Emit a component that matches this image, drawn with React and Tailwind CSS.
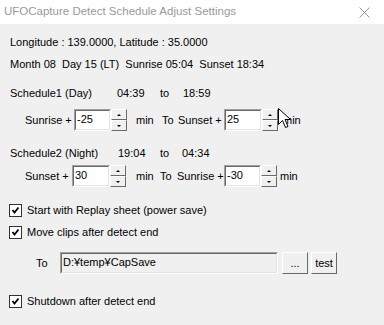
const font = { fontFamily: '"Liberation Sans", Arial, sans-serif' };

function SpinBox({ value, inputW = 37 }) {
  return (
    <div className="flex h-[22px]">
      <div
        className="h-[22px] border border-t-[#a0a0a0] border-l-[#a0a0a0] border-r-white border-b-white"
        style={{ width: inputW }}
      >
        <div className="h-full w-full border border-t-[#696969] border-l-[#696969] border-r-[#e3e3e3] border-b-[#e3e3e3] bg-white pl-[1px] leading-[17px]">
          {value}
        </div>
      </div>
      <div className="flex w-[16px] flex-col">
        <div className="flex h-[11px] items-center justify-center border border-t-white border-l-white border-r-[#696969] border-b-[#696969] bg-[#f0f0f0]">
          <svg width="4" height="2" viewBox="0 0 4 2"><path d="M2 0 L4 2 L0 2 Z" fill="#000" /></svg>
        </div>
        <div className="flex h-[11px] items-center justify-center border border-t-white border-l-white border-r-[#696969] border-b-[#696969] bg-[#f0f0f0]">
          <svg width="4" height="2" viewBox="0 0 4 2"><path d="M0 0 L4 0 L2 2 Z" fill="#000" /></svg>
        </div>
      </div>
    </div>
  );
}

function Check({ label }) {
  return (
    <div className="flex h-[16px] items-center pl-[9px]">
      <div className="flex h-[13px] w-[13px] items-center justify-center border border-[#333] bg-white">
        <svg width="9" height="9" viewBox="0 0 9 9">
          <path d="M1.5 4 L3.5 6.5 L7.5 1.5" stroke="#000" strokeWidth="1.8" fill="none" />
        </svg>
      </div>
      <span className="ml-[5px]">{label}</span>
    </div>
  );
}

function WinButton({ children, w }) {
  return (
    <div
      className="flex h-[22px] items-center justify-center border border-t-white border-l-white border-r-[#696969] border-b-[#696969] bg-[#f0f0f0]"
      style={{ width: w }}
    >
      {children}
    </div>
  );
}

export default function App() {
  return (
    <div className="relative h-[325px] w-[384px] overflow-hidden bg-[#f0f0f0] text-[11px] text-black" style={font}>
      {/* Title bar */}
      <div className="flex h-[24px] items-center justify-between bg-white pl-[4px] pr-[14px]">
        <span className="text-[11.5px] text-[#999]">UFOCapture Detect Schedule Adjust Settings</span>
        <svg width="11" height="11" viewBox="0 0 11 11">
          <path d="M0.5 0.5 L10.5 10.5 M10.5 0.5 L0.5 10.5" stroke="#999" strokeWidth="1" />
        </svg>
      </div>

      <div className="mt-[10px] flex h-[16px] items-center pl-[10px]">Longitude : 139.0000, Latitude : 35.0000</div>
      <div className="mt-[6px] flex h-[16px] items-center pl-[10px] whitespace-pre">Month 08  Day 15 (LT)  Sunrise 05:04  Sunset 18:34</div>

      {/* Schedule 1 */}
      <div className="mt-[13px] flex h-[16px] items-center pl-[10px]">
        <span className="w-[107px]">Schedule1 (Day)</span>
        <span className="w-[43px]">04:39</span>
        <span className="w-[23px]">to</span>
        <span>18:59</span>
      </div>
      <div className="mt-[8px] flex h-[22px] items-center pl-[25px]">
        <span className="w-[49px]">Sunrise +</span>
        <SpinBox value="-25" inputW={37} />
        <span className="ml-[9px] w-[26px]">min</span>
        <span className="w-[16px]">To</span>
        <span className="w-[46px]">Sunset +</span>
        <SpinBox value="25" inputW={38} />
        <span className="ml-[5px]">min</span>
      </div>

      {/* Schedule 2 */}
      <div className="mt-[14px] flex h-[16px] items-center pl-[10px]">
        <span className="w-[108px]">Schedule2 (Night)</span>
        <span className="w-[42px]">19:04</span>
        <span className="w-[22px]">to</span>
        <span>04:34</span>
      </div>
      <div className="mt-[4px] flex h-[22px] items-center pl-[25px]">
        <span className="w-[47px]">Sunset +</span>
        <SpinBox value="30" inputW={38} />
        <span className="ml-[10px] w-[24px]">min</span>
        <span className="w-[17px]">To</span>
        <span className="w-[47px]">Sunrise +</span>
        <SpinBox value="-30" inputW={37} />
        <span className="ml-[3px]">min</span>
      </div>

      <div className="mt-[15px]">
        <Check label="Start with Replay sheet (power save)" />
      </div>
      <div className="mt-[6px]">
        <Check label="Move clips after detect end" />
      </div>

      {/* Move destination */}
      <div className="mt-[12px] flex h-[22px] items-center pl-[36px]">
        <span className="w-[24px]">To</span>
        <div className="h-[22px] w-[218px] border border-t-[#a0a0a0] border-l-[#a0a0a0] border-r-white border-b-white">
          <div className="h-full w-full border border-t-[#696969] border-l-[#696969] border-r-[#e3e3e3] border-b-[#e3e3e3] bg-[#f0f0f0] pl-[1px] leading-[17px]">
            D:¥temp¥CapSave
          </div>
        </div>
        <div className="ml-[4px]">
          <WinButton w={26}>...</WinButton>
        </div>
        <div className="ml-[3px]">
          <WinButton w={26}>test</WinButton>
        </div>
      </div>

      <div className="mt-[19px]">
        <Check label="Shutdown after detect end" />
      </div>

      {/* Mouse cursor */}
      <svg className="absolute left-[278px] top-[108px]" width="14" height="22" viewBox="0 0 14 22">
        <path d="M0.5 0.5 L0.5 16.5 L4.5 12.5 L7.5 19.5 L10 18.5 L7 11.5 L12.5 11.5 Z" fill="#fff" stroke="#000" strokeWidth="1" />
      </svg>
    </div>
  );
}
